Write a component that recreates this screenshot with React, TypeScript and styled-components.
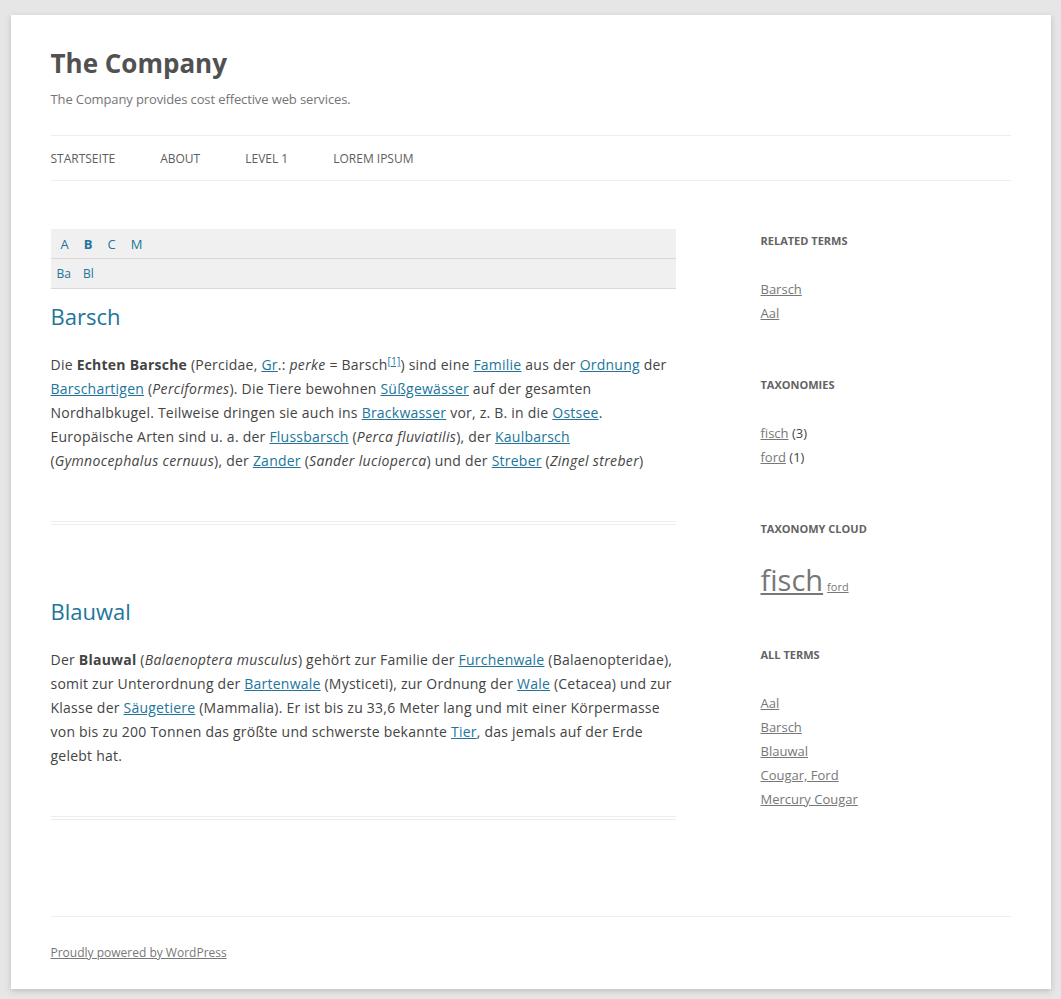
import React from 'react'
import styled, { createGlobalStyle } from 'styled-components'

const GlobalStyle = createGlobalStyle`
html, body {
  margin: 0;
  padding: 0;
}
body {
  background: #e6e6e6;
  font-family: "Open Sans", "Liberation Sans", sans-serif;
  color: #444;
  overflow: hidden;
}
`

const Page = styled.div`
width: 960px;
margin: 15px auto 11px;
padding: 0 40px;
background: #fff;
box-shadow: 0 2px 6px rgba(100, 100, 100, 0.3);
`

const Header = styled.header`
padding-top: 24px;
`

const SiteTitle = styled.h1`
margin: 0;
font-size: 26px;
line-height: 48px;
font-weight: bold;
color: #515151;
`

const Tagline = styled.h2`
margin: 0;
font-size: 13px;
line-height: 24px;
font-weight: normal;
letter-spacing: -0.12px;
color: #757575;
`

const Nav = styled.nav`
margin-top: 24px;
border-top: 1px solid #ededed;
border-bottom: 1px solid #ededed;
ul {
  display: flex;
  gap: 45px;
  list-style: none;
  margin: 0;
  padding: 1px 0 0;
}
li {
  font-size: 12px;
  line-height: 43px;
  text-transform: uppercase;
  color: #5e5e5e;
}
`

const Main = styled.div`
display: flex;
justify-content: space-between;
align-items: flex-start;
margin-top: 48px;
`

const Content = styled.div`
width: 625px;
`

const LetterRow = styled.div<{ $gap: number; $pad: number; $size: number }>`
display: flex;
align-items: center;
gap: ${p => p.$gap}px;
height: 29px;
padding-left: ${p => p.$pad}px;
background: #f0f0f0;
border-bottom: 1px solid #d9d9d9;
font-size: ${p => p.$size}px;
`

const Letter = styled.a<{ $active?: boolean }>`
color: #21759b;
text-decoration: none;
font-weight: ${p => (p.$active ? 'bold' : 'normal')};
`

const Glossary = styled.div`
margin-bottom: 13px;
`

const Article = styled.article`
padding-bottom: 48px;
border-bottom: 4px double #ededed;
margin-bottom: 72px;
`

const EntryTitle = styled.h2`
margin: 0 0 23px;
font-size: 22px;
line-height: 28px;
font-weight: normal;
color: #21759b;
`

const Text = styled.p`
margin: 0;
font-size: 14px;
line-height: 24px;
letter-spacing: 0.23px;
color: #444;
a {
  color: #21759b;
  text-decoration: underline;
}
i {
  letter-spacing: 0.35px;
}
sup {
  font-size: 10px;
  line-height: 0;
  vertical-align: 5px;
}
`

const Sidebar = styled.aside`
width: 250px;
`

const Widget = styled.section`
margin-bottom: 48px;
`

const WidgetTitle = styled.h3`
margin: 0 0 24px;
font-size: 11px;
line-height: 24px;
font-weight: bold;
text-transform: uppercase;
color: #636363;
`

const TermList = styled.ul`
list-style: none;
margin: 0;
padding: 0;
li {
  font-size: 13px;
  line-height: 24px;
  color: #444;
}
a {
  color: #777;
  text-decoration: underline;
}
`

const Cloud = styled.div`
height: 30px;
line-height: 30px;
white-space: nowrap;
a {
  color: #777;
  text-decoration: underline;
}
`

const CloudTag = styled.a<{ $size: number }>`
font-size: ${p => p.$size}px;
margin-right: 4px;
`

const Footer = styled.footer`
margin-top: 24px;
padding: 24px 0;
border-top: 1px solid #ededed;
font-size: 12px;
line-height: 24px;
a {
  color: #777;
  text-decoration: underline;
}
`

const navItems = ['Startseite', 'About', 'Level 1', 'Lorem Ipsum']

export default function App() {
  return (
    <>
      <GlobalStyle />
      <Page>
        <Header>
          <SiteTitle>The Company</SiteTitle>
          <Tagline>The Company provides cost effective web services.</Tagline>
          <Nav>
            <ul>
              {navItems.map(item => (
                <li key={item}>{item}</li>
              ))}
            </ul>
          </Nav>
        </Header>

        <Main>
          <Content>
            <Glossary>
              <LetterRow $gap={15} $pad={10} $size={13}>
                <Letter href="#">A</Letter>
                <Letter href="#" $active>B</Letter>
                <Letter href="#">C</Letter>
                <Letter href="#">M</Letter>
              </LetterRow>
              <LetterRow $gap={12} $pad={6} $size={12}>
                <Letter href="#">Ba</Letter>
                <Letter href="#">Bl</Letter>
              </LetterRow>
            </Glossary>

            <Article>
              <EntryTitle>Barsch</EntryTitle>
              <Text>
                Die <b>Echten Barsche</b> (Percidae, <a href="#">Gr</a>.: <i>perke</i> = Barsch
                <sup><a href="#">[1]</a></sup>) sind eine <a href="#">Familie</a> aus der{' '}
                <a href="#">Ordnung</a> der <a href="#">Barschartigen</a> (<i>Perciformes</i>). Die
                Tiere bewohnen <a href="#">Süßgewässer</a> auf der gesamten Nordhalbkugel. Teilweise
                dringen sie auch ins <a href="#">Brackwasser</a> vor, z. B. in die{' '}
                <a href="#">Ostsee</a>. Europäische Arten sind u. a. der <a href="#">Flussbarsch</a>{' '}
                (<i>Perca fluviatilis</i>), der <a href="#">Kaulbarsch</a> (<i>Gymnocephalus cernuus</i>),
                der <a href="#">Zander</a> (<i>Sander lucioperca</i>) und der <a href="#">Streber</a>{' '}
                (<i>Zingel streber</i>)
              </Text>
            </Article>

            <Article>
              <EntryTitle>Blauwal</EntryTitle>
              <Text>
                Der <b>Blauwal</b> (<i>Balaenoptera musculus</i>) gehört zur Familie der{' '}
                <a href="#">Furchenwale</a> (Balaenopteridae), somit zur Unterordnung der{' '}
                <a href="#">Bartenwale</a> (Mysticeti), zur Ordnung der <a href="#">Wale</a> (Cetacea)
                und zur Klasse der <a href="#">Säugetiere</a> (Mammalia). Er ist bis zu 33,6 Meter lang
                und mit einer Körpermasse von bis zu 200 Tonnen das größte und schwerste bekannte{' '}
                <a href="#">Tier</a>, das jemals auf der Erde gelebt hat.
              </Text>
            </Article>
          </Content>

          <Sidebar>
            <Widget>
              <WidgetTitle>Related Terms</WidgetTitle>
              <TermList>
                <li><a href="#">Barsch</a></li>
                <li><a href="#">Aal</a></li>
              </TermList>
            </Widget>
            <Widget>
              <WidgetTitle>Taxonomies</WidgetTitle>
              <TermList>
                <li><a href="#">fisch</a> (3)</li>
                <li><a href="#">ford</a> (1)</li>
              </TermList>
            </Widget>
            <Widget>
              <WidgetTitle>Taxonomy Cloud</WidgetTitle>
              <Cloud>
                <CloudTag href="#" $size={29}>fisch</CloudTag>
                <CloudTag href="#" $size={11}>ford</CloudTag>
              </Cloud>
            </Widget>
            <Widget>
              <WidgetTitle>All Terms</WidgetTitle>
              <TermList>
                <li><a href="#">Aal</a></li>
                <li><a href="#">Barsch</a></li>
                <li><a href="#">Blauwal</a></li>
                <li><a href="#">Cougar, Ford</a></li>
                <li><a href="#">Mercury Cougar</a></li>
              </TermList>
            </Widget>
          </Sidebar>
        </Main>

        <Footer>
          <a href="#">Proudly powered by WordPress</a>
        </Footer>
      </Page>
    </>
  )
}
